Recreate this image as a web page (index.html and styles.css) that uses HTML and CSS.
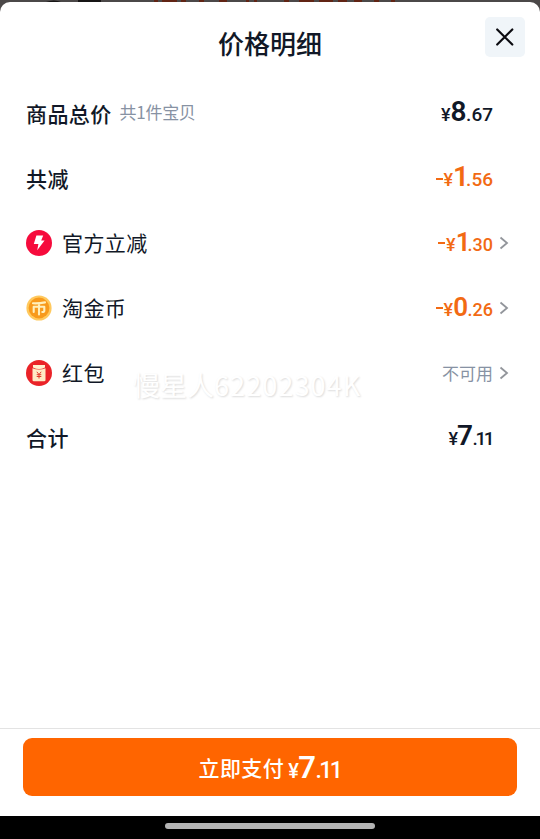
FILE: index.html
```html
<!DOCTYPE html>
<html lang="zh-CN">

<head>
  <meta charset="UTF-8" />
  <meta name="viewport" content="width=device-width, initial-scale=1.0" />
  <title>价格明细</title>
  <link rel="stylesheet" href="styles.css">
</head>

<body>
  <!-- Page behind the sheet -->
  <svg class="backdrop" viewBox="0 0 540 16">
    <path d="M46 2Q54-1 61 2zM78 0h23v2H78z" fill="#171515" />
    <path d="M154 0h4v2h-4zM162 0h15v2h-15zM181 0h5v2h-5zM199 0h5v2h-5zM219 0h8v2h-8zM246 0h3v2h-3zM254 0h3v2h-3zM284 0h5v2h-5zM299 0h15v2h-15zM319 0h14v2h-14zM338 0h9v2h-9zM354 0h8v2h-8zM374 0h5v2h-5zM391 0h4v2h-4z" fill="#612414" />
  </svg>

  <div class="sheet">
    <header class="header">
      <h1>价格明细</h1>
      <button class="close-btn" aria-label="关闭">
        <svg width="40" height="40" viewBox="0 0 40 40">
          <path d="M12.200 12.500L27.300 27.500M27.300 12.500L12.200 27.500" />
        </svg>
      </button>
    </header>

    <main class="list">
      <div class="row total">
        <span class="label">商品总价</span>
        <span class="count">共1件宝贝</span>
        <span class="price"><i>¥</i><b>8</b><em>.67</em></span>
      </div>

      <div class="row total">
        <span class="label">共减</span>
        <span class="price minus"><u></u><i>¥</i><b class="one">1</b><em>.56</em></span>
      </div>

      <div class="row">
        <svg class="icon" viewBox="0 0 26 26">
          <circle cx="13" cy="13" r="13" fill="#f60b3c" />
          <path d="M10.4 5.5h6.8l-2 5h3.4l-7.4 9.8 1.2-6.4H7.8z" fill="#fff" />
        </svg>
        <span class="label">官方立减</span>
        <span class="price minus small"><u></u><i>¥</i><b class="one">1</b><em>.30</em></span>
        <svg class="arrow" viewBox="0 0 10 14"><path d="M1.500 1.500L8 7l-6.500 5.500" /></svg>
      </div>

      <div class="row">
        <svg class="icon" viewBox="0 0 26 26">
          <circle cx="13" cy="13" r="12.6" fill="#ffc95e" />
          <circle cx="13" cy="13" r="10.4" fill="#f89a1c" />
          <path d="M7 8.300Q13 8.600 19 7.400M7.700 17v-5.300h10.600v4q0 1.300-2 1.300M13 8.300v11.200" fill="none" stroke="#fff0bd" stroke-width="2.1" stroke-linecap="round" stroke-linejoin="round" />
        </svg>
        <span class="label">淘金币</span>
        <span class="price minus small"><u></u><i>¥</i><b>0</b><em>.26</em></span>
        <svg class="arrow" viewBox="0 0 10 14"><path d="M1.500 1.500L8 7l-6.500 5.500" /></svg>
      </div>

      <div class="row">
        <svg class="icon" viewBox="0 0 26 26">
          <circle cx="13" cy="13" r="13" fill="#ea2328" />
          <path d="M7 5h12v2.400q-6 3-12 0z" fill="#fff0cf" />
          <path d="M6.500 8.300q6.500 2.400 13 0V20q0 1.300-1.300 1.300H7.800Q6.500 21.300 6.500 20z" fill="#ffeac5" />
          <path d="M10.800 11.800l2.200 2.700 2.200-2.700M13 14.500v4M10.700 14.700h4.600M10.700 16.500h4.600" fill="none" stroke="#e33a2b" stroke-width="1" />
        </svg>
        <span class="label">红包</span>
        <span class="unavailable">不可用</span>
        <svg class="arrow" viewBox="0 0 10 14"><path d="M1.500 1.500L8 7l-6.500 5.500" /></svg>
      </div>

      <div class="row total">
        <span class="label">合计</span>
        <span class="price narrow"><i>¥</i><b>7</b><em>.11</em></span>
      </div>
      <div class="watermark">慢星人<span>62202304K</span></div>
    </main>

    <footer class="footer">
      <button class="pay-btn">
        <span>立即支付</span>
        <span class="price narrow"><i>¥</i><b>7</b><em>.11</em></span>
      </button>
    </footer>
  </div>

  <div class="navbar"><div class="home"></div></div>
</body>

</html>
```

FILE: styles.css
```css
* {
  margin: 0;
  padding: 0;
  box-sizing: border-box;
}

body {
  height: 839px;
  display: flex;
  flex-direction: column;
  overflow: hidden;
  padding-top: 2px;
  background-color: #4b4848;
  color: #111827;
  font-family: "Noto Sans CJK SC", sans-serif;
}

.backdrop {
  position: absolute;
  top: 0;
  left: 0;
  width: 540px;
  height: 16px;
}

.sheet {
  position: relative;
  height: 814px;
  display: flex;
  flex-direction: column;
  background-color: #fff;
  border-radius: 10px 10px 0 0;
}

.header {
  height: 79px;
  display: grid;
  grid-template-columns: 1fr auto 1fr;
  padding: 15px 15px 0;
}

.header h1 {
  grid-column: 2;
  font-size: 26px;
  line-height: 38px;
  font-weight: 500;
  margin-top: 7px;
}

.close-btn {
  justify-self: end;
  width: 40px;
  height: 40px;
  border: none;
  border-radius: 5px;
  background-color: #f0f5f9;
}

.close-btn svg {
  display: block;
  fill: none;
  stroke: #0b0b10;
  stroke-width: 2.2;
  stroke-linecap: round;
}

.list {
  position: relative;
  flex: 1;
}

.row {
  display: flex;
  align-items: center;
  height: 64.8px;
  padding: 0 31px 0 26px;
}

.label {
  font-size: 21px;
  line-height: 30px;
  letter-spacing: 0.4px;
  padding-bottom: 1px;
}

.total {
  padding-right: 47px;
}

.total .label {
  font-weight: 500;
}

.count {
  margin-left: 8px;
  color: #8792a3;
  font-size: 17px;
  line-height: 26px;
  letter-spacing: -0.3px;
  padding-bottom: 2px;
}

.icon {
  width: 26px;
  height: 26px;
  margin-right: 10px;
}

.arrow {
  width: 10px;
  height: 14px;
  margin-left: 6px;
  fill: none;
  stroke: #92959b;
  stroke-width: 1.8;
}

.price {
  display: flex;
  align-items: baseline;
  margin-left: auto;
  padding-top: 1px;
  font-family: Roboto, sans-serif;
  line-height: 32px;
}

.price i {
  font-size: 18px;
  font-style: normal;
  font-weight: 500;
}

.price b {
  font-size: 28px;
  font-weight: 600;
  letter-spacing: -0.5px;
}

.price em {
  font-size: 19px;
  font-style: normal;
  font-weight: 500;
}

.price u {
  width: 7px;
  height: 2px;
  margin-right: 1px;
  align-self: center;
  background-color: currentColor;
}

.price .one {
  letter-spacing: -3px;
}

.minus {
  color: #f26a13;
}

.small b {
  font-size: 26px;
}

.small em {
  font-size: 18px;
}

.narrow i {
  margin-right: -1px;
}

.narrow em {
  letter-spacing: -2.5px;
  padding-right: 1px;
}

.unavailable {
  margin-left: auto;
  color: #8792a3;
  font-size: 17px;
}

.watermark {
  position: absolute;
  left: 133px;
  top: 285px;
  color: #fff;
  font-size: 27px;
  line-height: 38px;
  text-shadow: 1px 1px 2px #dcdcdc;
}

.watermark span {
  letter-spacing: 1.1px;
}

.footer {
  height: 88px;
  padding: 9px 23px 0;
  border-top: 1px solid #e3e3e3;
}

.pay-btn {
  width: 100%;
  height: 58px;
  display: flex;
  align-items: center;
  justify-content: center;
  border: none;
  border-radius: 9px;
  background-color: #ff6500;
  color: #fff;
  font-family: inherit;
  font-size: 21px;
  font-weight: 500;
  letter-spacing: 0.4px;
}

.pay-btn .price {
  margin-left: 4px;
  padding-top: 5px;
}

.pay-btn i {
  font-size: 20px;
}

.pay-btn b {
  font-size: 31px;
}

.pay-btn em {
  font-size: 23px;
}

.navbar {
  flex: 1;
  display: flex;
  justify-content: center;
  padding-top: 7px;
  background-color: #000;
}

.home {
  width: 210px;
  height: 6px;
  border-radius: 3px;
  background-color: #b4b4b4;
}
```
